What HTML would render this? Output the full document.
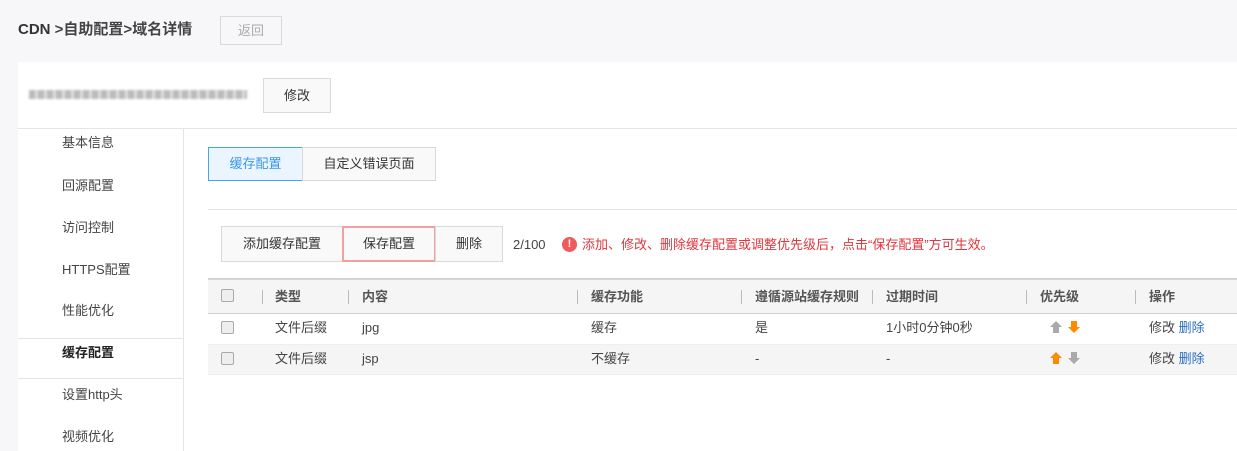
<!DOCTYPE html><html><head><meta charset="utf-8"><style>
*{box-sizing:border-box;margin:0;padding:0}
body{width:1237px;height:451px;overflow:hidden;background:#f7f7f9;font-family:"Liberation Sans","Noto Sans CJK SC",sans-serif;font-size:13px;color:#333;position:relative;line-height:18px}
.a{position:absolute}
.btn{position:absolute;border:1px solid #d9d9d9;background:#f9f9f9;text-align:center;color:#333}
.side div{position:absolute;left:62px;font-size:13px;color:#444;line-height:18px}
.th{position:absolute;top:288px;font-weight:bold;color:#555}
.sep{position:absolute;top:290px;width:1px;height:14px;background:#bbb}
.cb{position:absolute;left:221px;width:13px;height:13px;border:1px solid #aaa;border-radius:2px;background:#eee}
.td{position:absolute;color:#444}
.r1{top:319px}.r2{top:350px}
</style></head><body>
<div class="a" style="left:18px;top:20px;font-size:15px;font-weight:bold;color:#333;line-height:20px">CDN <span style="color:#444">&gt;自助配置&gt;域名详情</span></div>
<div class="btn" style="left:220px;top:16px;width:62px;height:29px;line-height:27px;color:#aaa;background:#f7f7f9">返回</div>
<div class="a" style="left:18px;top:62px;width:1219px;height:389px;background:#fff"></div>
<div class="a" style="left:29px;top:90px;width:218px;height:9px;background:repeating-linear-gradient(90deg,#bbb 0 6px,#ddd 6px 9px);filter:blur(1px)"></div>
<div class="btn" style="left:263px;top:78px;width:68px;height:35px;line-height:33px">修改</div>
<div class="a" style="left:18px;top:128px;width:1219px;height:1px;background:#e5e5e5"></div>
<div class="a" style="left:183px;top:129px;width:1px;height:322px;background:#e5e5e5"></div>
<div class="a" style="left:18px;top:338px;width:165px;height:41px;border-top:1px solid #e5e5e5;border-bottom:1px solid #e5e5e5;background:#fff"></div>
<div class="side"><div style="top:134px">基本信息</div><div style="top:177px">回源配置</div><div style="top:219px">访问控制</div><div style="top:261px">HTTPS配置</div><div style="top:302px">性能优化</div><div style="top:344px;color:#222;font-weight:bold">缓存配置</div><div style="top:386px">设置http头</div><div style="top:428px">视频优化</div></div>
<div class="btn" style="left:208px;top:147px;width:95px;height:34px;line-height:32px;background:#eaf5ff;border-color:#45a6f2;color:#3a97e8">缓存配置</div>
<div class="btn" style="left:302px;top:147px;width:134px;height:34px;line-height:32px">自定义错误页面</div>
<div class="a" style="left:208px;top:209px;width:1029px;height:1px;background:#e5e5e5"></div>
<div class="btn" style="left:221px;top:226px;width:122px;height:36px;line-height:34px">添加缓存配置</div>
<div class="btn" style="left:342px;top:226px;width:94px;height:36px;border:2px solid #f3a0a0;line-height:32px">保存配置</div>
<div class="btn" style="left:435px;top:226px;width:68px;height:36px;line-height:34px">删除</div>
<div class="a" style="left:513px;top:236px;color:#444">2/100</div>
<div class="a" style="left:562px;top:237px;width:15px;height:15px;border-radius:50%;background:#ef5a5a;color:#fff;font-size:11px;font-weight:bold;text-align:center;line-height:15px">!</div>
<div class="a" style="left:582px;top:236px;color:#e0363c;font-size:13px">添加、修改、删除缓存配置或调整优先级后，点击“保存配置”方可生效。</div>
<div class="a" style="left:208px;top:278px;width:1029px;height:36px;background:#f5f5f5;border-top:2px solid #d5d5d5;border-bottom:1px solid #d0d0d0"></div>
<div class="a" style="left:208px;top:344px;width:1029px;height:31px;background:#f5f5f5;border-top:1px solid #eee;border-bottom:1px solid #eee"></div>
<div class="cb" style="top:289px"></div><div class="cb" style="top:321px"></div><div class="cb" style="top:352px"></div>
<div class="sep" style="left:262px"></div><div class="sep" style="left:348px"></div><div class="sep" style="left:577px"></div><div class="sep" style="left:741px"></div><div class="sep" style="left:872px"></div><div class="sep" style="left:1026px"></div><div class="sep" style="left:1135px"></div>
<div class="th" style="left:275px">类型</div><div class="th" style="left:362px">内容</div><div class="th" style="left:591px">缓存功能</div><div class="th" style="left:755px">遵循源站缓存规则</div><div class="th" style="left:886px">过期时间</div><div class="th" style="left:1040px">优先级</div><div class="th" style="left:1149px">操作</div>
<div class="td r1" style="left:275px">文件后缀</div><div class="td r1" style="left:362px">jpg</div><div class="td r1" style="left:591px">缓存</div><div class="td r1" style="left:755px">是</div><div class="td r1" style="left:886px">1小时0分钟0秒</div>
<div class="td r1" style="left:1149px">修改 <span style="color:#2a6fbf">删除</span></div>
<div class="td r2" style="left:275px">文件后缀</div><div class="td r2" style="left:362px">jsp</div><div class="td r2" style="left:591px">不缓存</div><div class="td r2" style="left:755px">-</div><div class="td r2" style="left:886px">-</div>
<div class="td r2" style="left:1149px">修改 <span style="color:#2a6fbf">删除</span></div>
<svg class="a" style="left:1050px;top:320px" width="32" height="14"><path d="M6 1 L12 7 H9 V13 H3 V7 H0 Z" fill="#aaa"/><path d="M24 13 L30 7 H27 V1 H21 V7 H18 Z" fill="#ff8a00"/></svg>
<svg class="a" style="left:1050px;top:351px" width="32" height="14"><path d="M6 1 L12 7 H9 V13 H3 V7 H0 Z" fill="#ff8a00"/><path d="M24 13 L30 7 H27 V1 H21 V7 H18 Z" fill="#aaa"/></svg>
</body></html>
